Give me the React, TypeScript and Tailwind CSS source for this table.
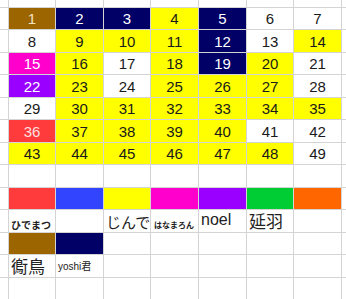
const Y = "bg-[#ffff00] text-[#1a1a1a]";
const W = "bg-white text-[#1a1a1a]";
const N = "bg-[#000066] text-white";
const B = "bg-[#9c6500] text-[#f3e3c0]";
const M = "bg-[#ff00cc] text-white";
const P = "bg-[#9900ff] text-white";
const R = "bg-[#ff3b3b] text-[#ffe0e0]";

const numberRows: string[][] = [
  [B, N, N, Y, N, W, W],
  [W, Y, Y, Y, N, W, Y],
  [M, Y, W, Y, N, Y, W],
  [P, Y, W, Y, Y, Y, W],
  [W, Y, Y, Y, Y, Y, Y],
  [R, Y, Y, Y, Y, W, W],
  [Y, Y, Y, Y, Y, Y, W],
];

const legendColors = [
  "bg-[#ff3b3b]",
  "bg-[#3344ff]",
  "bg-[#ffff00]",
  "bg-[#ff00cc]",
  "bg-[#9900ff]",
  "bg-[#00cc33]",
  "bg-[#ff6600]",
];

const rowHeights = [
  "h-[7px]",
  "h-[21px]",
  "h-[22px]",
  "h-[21px]",
  "h-[22px]",
  "h-[21px]",
  "h-[22px]",
  "h-[21px]",
  "h-[22px]",
  "h-[21px]",
  "h-[22px]",
  "h-[21px]",
  "h-[22px]",
  "h-[22px]",
];

function Blank() {
  return <div className="bg-white" />;
}

function Row({ h, children }: { h: string; children: React.ReactNode }) {
  return (
    <>
      <div className={`bg-white ${h}`} />
      {children}
      <div className="bg-white" />
    </>
  );
}

function TextCell({ text, className }: { text: string; className: string }) {
  return (
    <div className="bg-white flex items-end pl-[2px] overflow-visible whitespace-nowrap text-[#222]">
      <span className={className}>{text}</span>
    </div>
  );
}

export default function App() {
  return (
    <div className="w-[346px] h-[299px] overflow-hidden bg-white font-['Liberation_Sans','Noto_Sans_CJK_JP',sans-serif]">
      <div className="grid grid-cols-[8px_46px_47px_46px_47px_47px_46px_47px_1fr] gap-px bg-[#d4d4d4]">
        <Row h={rowHeights[0]}>
          {Array.from({ length: 7 }).map((_, i) => (
            <Blank key={i} />
          ))}
        </Row>
        {numberRows.map((row, r) => (
          <Row key={r} h={rowHeights[r + 1]}>
            {row.map((c, i) => (
              <div
                key={i}
                className={`${c} flex items-center justify-center text-[15px] leading-none`}
              >
                {r * 7 + i + 1}
              </div>
            ))}
          </Row>
        ))}
        <Row h={rowHeights[8]}>
          {Array.from({ length: 7 }).map((_, i) => (
            <Blank key={i} />
          ))}
        </Row>
        <Row h={rowHeights[9]}>
          {legendColors.map((c) => (
            <div key={c} className={c} />
          ))}
        </Row>
        <Row h={rowHeights[10]}>
          <TextCell text="ひでまつ" className="text-[10px] font-bold leading-none mb-[1px]" />
          <Blank />
          <TextCell text="じんで" className="text-[15px] leading-none mb-[2px]" />
          <TextCell text="はなまろん" className="text-[8px] font-bold leading-none mb-[2px] ml-[1px]" />
          <TextCell text="noel" className="text-[16px] leading-none mb-[4px]" />
          <TextCell text="延羽" className="text-[17px] leading-none mb-[1px]" />
          <Blank />
        </Row>
        <Row h={rowHeights[11]}>
          <div className="bg-[#9c6500]" />
          <div className="bg-[#000066]" />
          {Array.from({ length: 5 }).map((_, i) => (
            <Blank key={i} />
          ))}
        </Row>
        <Row h={rowHeights[12]}>
          <TextCell text="鵆鳥" className="text-[17px] leading-none mb-[1px]" />
          <TextCell text="yoshi君" className="text-[10px] leading-none mb-[5px]" />
          {Array.from({ length: 5 }).map((_, i) => (
            <Blank key={i} />
          ))}
        </Row>
        <Row h={rowHeights[13]}>
          {Array.from({ length: 7 }).map((_, i) => (
            <Blank key={i} />
          ))}
        </Row>
      </div>
    </div>
  );
}
